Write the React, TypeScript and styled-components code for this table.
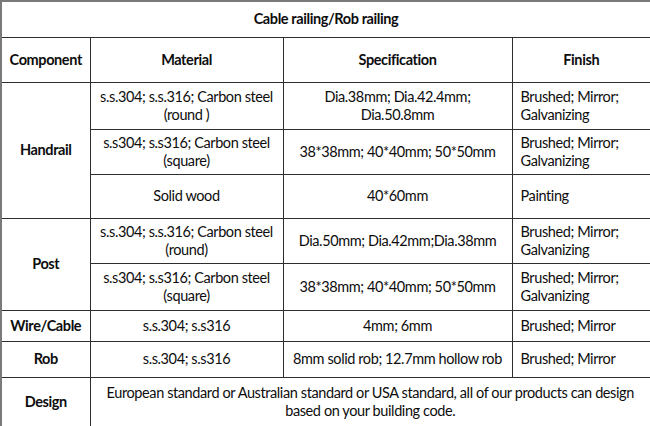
import React from "react";
import styled, { createGlobalStyle } from "styled-components";

const Global = createGlobalStyle`
  html, body { margin: 0; padding: 0; background: #ffffff; }
  body { font-family: Lato, "Liberation Sans", sans-serif; }
`;

const Table = styled.table`
  width: 650px;
  height: 426px;
  border-collapse: collapse;
  table-layout: fixed;
  border: 2px solid #7a7a7a;
  font-family: Lato, "Liberation Sans", sans-serif;
  font-size: 14.5px;
  letter-spacing: -0.4px;
  line-height: 18px;
  color: #0d0d0d;
`;

const Row = styled.tr<{ $h: number }>`
  height: ${(p) => p.$h}px;
`;

const Cell = styled.td<{ $align?: "left" | "center"; $bold?: boolean }>`
  border: 1px solid #2e2e2e;
  padding: ${(p) => (p.$align === "left" ? "0 2px 0 8px" : "0 2px")};
  text-align: ${(p) => p.$align ?? "center"};
  font-weight: ${(p) => (p.$bold ? 700 : 400)};
  vertical-align: middle;
  white-space: nowrap;
`;

const Title = styled.th`
  border: 1px solid #2e2e2e;
  font-weight: 700;
  text-align: center;
  padding: 0;
`;

const Head = styled.th`
  border: 1px solid #2e2e2e;
  font-weight: 700;
  text-align: center;
  padding: 0 2px;
  white-space: nowrap;
`;

export default function App() {
  return (
    <>
      <Global />
      <Table>
        <colgroup>
          <col style={{ width: 89 }} />
          <col style={{ width: 193 }} />
          <col style={{ width: 229 }} />
          <col style={{ width: 139 }} />
        </colgroup>
        <tbody>
          <Row $h={36}>
            <Title colSpan={4}>Cable railing/Rob railing</Title>
          </Row>
          <Row $h={45}>
            <Head>Component</Head>
            <Head>Material</Head>
            <Head>Specification</Head>
            <Head>Finish</Head>
          </Row>
          <Row $h={47}>
            <Cell $bold rowSpan={3}>Handrail</Cell>
            <Cell>s.s.304; s.s.316; Carbon steel<br />(round )</Cell>
            <Cell>Dia.38mm; Dia.42.4mm;<br />Dia.50.8mm</Cell>
            <Cell $align="left">Brushed; Mirror;<br />Galvanizing</Cell>
          </Row>
          <Row $h={45}>
            <Cell>s.s304; s.s316; Carbon steel<br />(square)</Cell>
            <Cell>38*38mm; 40*40mm; 50*50mm</Cell>
            <Cell $align="left">Brushed; Mirror;<br />Galvanizing</Cell>
          </Row>
          <Row $h={44}>
            <Cell>Solid wood</Cell>
            <Cell>40*60mm</Cell>
            <Cell $align="left">Painting</Cell>
          </Row>
          <Row $h={45}>
            <Cell $bold rowSpan={2}>Post</Cell>
            <Cell>s.s.304; s.s.316; Carbon steel<br />(round)</Cell>
            <Cell>Dia.50mm; Dia.42mm;Dia.38mm</Cell>
            <Cell $align="left">Brushed; Mirror;<br />Galvanizing</Cell>
          </Row>
          <Row $h={47}>
            <Cell>s.s304; s.s316; Carbon steel<br />(square)</Cell>
            <Cell>38*38mm; 40*40mm; 50*50mm</Cell>
            <Cell $align="left">Brushed; Mirror;<br />Galvanizing</Cell>
          </Row>
          <Row $h={31}>
            <Cell $bold>Wire/Cable</Cell>
            <Cell>s.s.304; s.s316</Cell>
            <Cell>4mm; 6mm</Cell>
            <Cell $align="left">Brushed; Mirror</Cell>
          </Row>
          <Row $h={36}>
            <Cell $bold>Rob</Cell>
            <Cell>s.s.304; s.s316</Cell>
            <Cell>8mm solid rob; 12.7mm hollow rob</Cell>
            <Cell $align="left">Brushed; Mirror</Cell>
          </Row>
          <Row $h={50}>
            <Cell $bold>Design</Cell>
            <Cell colSpan={3}>
              European standard or Australian standard or USA standard, all of our products can design
              <br />
              based on your building code.
            </Cell>
          </Row>
        </tbody>
      </Table>
    </>
  );
}
